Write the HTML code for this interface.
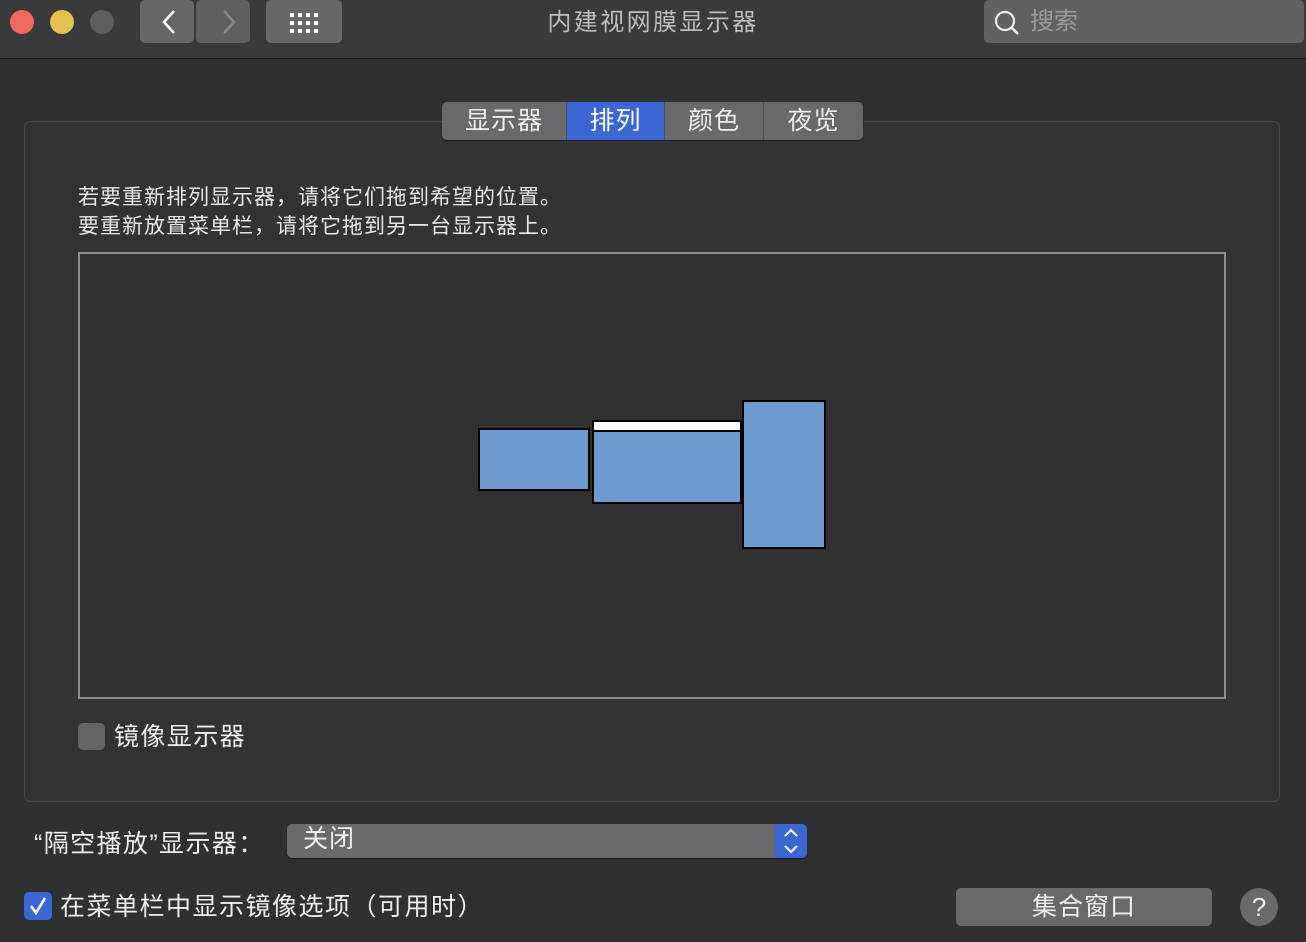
<!DOCTYPE html>
<html><head><meta charset="utf-8"><style>
*{margin:0;padding:0;box-sizing:border-box}
body{width:1306px;height:942px;background:#2f3032;font-family:"Liberation Sans","Noto Sans CJK SC",sans-serif;color:#dcdcdc;position:relative;overflow:hidden}
.a{position:absolute}
.tb{left:0;top:0;width:1306px;height:59px;background:#3a3a3c;border-bottom:1px solid #1a1a1a}
.dot{width:24px;height:24px;border-radius:50%;top:10px}
.btn{background:#666768;border-radius:5px}
.panel{left:24px;top:121px;width:1256px;height:681px;border:1px solid #48484a;border-radius:6px;background:#333335}
.tabs{left:442px;top:102px;height:38px;display:flex;border-radius:5px;overflow:hidden;box-shadow:0 1px 1px rgba(0,0,0,.4)}
.tabs div{background:#69696b;color:#eee;font-size:25px;line-height:38px;text-align:center;border-right:1px solid #505050;letter-spacing:1px}
.arr{left:78px;top:252px;width:1148px;height:447px;border:2px solid #8c8c8c;background:#313131}
.r{background:#6f9bd1;border:2px solid #000}
</style></head><body>
<div class="a tb"></div>
<div class="a dot" style="left:10px;background:#ec6a5e"></div>
<div class="a dot" style="left:50px;background:#e1c04c"></div>
<div class="a dot" style="left:90px;background:#5e5e60"></div>
<div class="a btn" style="left:140px;top:0;width:54px;height:43px"></div>
<div class="a btn" style="left:196px;top:0;width:54px;height:43px;background:#5f5f61"></div>
<svg class="a" style="left:140px;top:0" width="110" height="43"><path d="M34 11 L24 22 L34 33" stroke="#fff" stroke-width="2.5" fill="none"/><path d="M84 11 L94 22 L84 33" stroke="#888" stroke-width="2.5" fill="none"/></svg>
<div class="a btn" style="left:266px;top:0;width:76px;height:43px"></div>
<svg class="a" style="left:289px;top:12px" width="32" height="22"><g fill="#fff"><rect x="1" y="1" width="4" height="4"/><rect x="9" y="1" width="4" height="4"/><rect x="17" y="1" width="4" height="4"/><rect x="25" y="1" width="4" height="4"/><rect x="1" y="9" width="4" height="4"/><rect x="9" y="9" width="4" height="4"/><rect x="17" y="9" width="4" height="4"/><rect x="25" y="9" width="4" height="4"/><rect x="1" y="17" width="4" height="4"/><rect x="9" y="17" width="4" height="4"/><rect x="17" y="17" width="4" height="4"/><rect x="25" y="17" width="4" height="4"/></g></svg>
<div class="a" style="left:0;width:1306px;top:6px;text-align:center;font-size:24px;color:#bdbdbd;line-height:34px;letter-spacing:2.4px">内建视网膜显示器</div>
<div class="a btn" style="left:984px;top:0;width:320px;height:43px;background:#616163"></div>
<svg class="a" style="left:992px;top:9px" width="32" height="28"><circle cx="13" cy="12" r="9" stroke="#eee" stroke-width="2.2" fill="none"/><path d="M19 18 L26 25" stroke="#eee" stroke-width="2.5"/></svg>
<div class="a" style="left:1030px;top:6px;font-size:24px;color:#9a9a9a;line-height:32px">搜索</div>

<div class="a panel"></div>
<div class="a tabs"><div style="width:125px">显示器</div><div style="width:98px;background:#3c66d4;color:#fff">排列</div><div style="width:99px">颜色</div><div style="width:99px;border:none">夜览</div></div>
<div class="a" style="left:78px;top:183px;font-size:21px;letter-spacing:1px;line-height:29px;color:#e8e8e8">若要重新排列显示器，请将它们拖到希望的位置。<br>要重新放置菜单栏，请将它拖到另一台显示器上。</div>
<div class="a arr"></div>
<div class="a r" style="left:478px;top:428px;width:112px;height:63px"></div>
<div class="a r" style="left:592px;top:420px;width:150px;height:84px"></div>
<div class="a" style="left:594px;top:422px;width:146px;height:10px;background:#fff;border-bottom:2px solid #000"></div>
<div class="a r" style="left:742px;top:400px;width:84px;height:149px"></div>
<div class="a" style="left:78px;top:723px;width:27px;height:27px;border-radius:5px;background:#646466"></div>
<div class="a" style="left:114px;top:720px;font-size:25px;letter-spacing:1.4px;line-height:34px;color:#eee">镜像显示器</div>

<div class="a" style="left:34px;top:827px;font-size:25px;letter-spacing:1.4px;line-height:34px;color:#eee">“隔空播放”显示器：</div>
<div class="a" style="left:287px;top:824px;width:520px;height:34px;border-radius:5px;background:#6a6a6c;box-shadow:0 1px 1px rgba(0,0,0,.5)"></div>
<div class="a" style="left:775px;top:824px;width:32px;height:34px;border-radius:0 5px 5px 0;background:#3c66d4"></div>
<svg class="a" style="left:775px;top:824px" width="32" height="34"><path d="M10 12 L16 6 L22 12 M10 22 L16 28 L22 22" stroke="#fff" stroke-width="2" fill="none"/></svg>
<div class="a" style="left:303px;top:822px;font-size:25px;letter-spacing:1px;line-height:34px;color:#f0f0f0">关闭</div>

<div class="a" style="left:24px;top:892px;width:28px;height:28px;border-radius:5px;background:#3c66d4"></div>
<svg class="a" style="left:24px;top:892px" width="28" height="28"><path d="M7 14 L12 21 L21 6" stroke="#fff" stroke-width="2.6" fill="none"/></svg>
<div class="a" style="left:60px;top:890px;font-size:25px;letter-spacing:1.5px;line-height:34px;color:#eee">在菜单栏中显示镜像选项（可用时）</div>
<div class="a" style="left:956px;top:888px;width:256px;height:38px;border-radius:5px;background:#69696b;text-align:center;font-size:25px;letter-spacing:1px;line-height:38px;color:#eee">集合窗口</div>
<div class="a" style="left:1240px;top:888px;width:38px;height:38px;border-radius:50%;background:#69696b;text-align:center;font-size:26px;line-height:38px;color:#eee">?</div>
</body></html>
